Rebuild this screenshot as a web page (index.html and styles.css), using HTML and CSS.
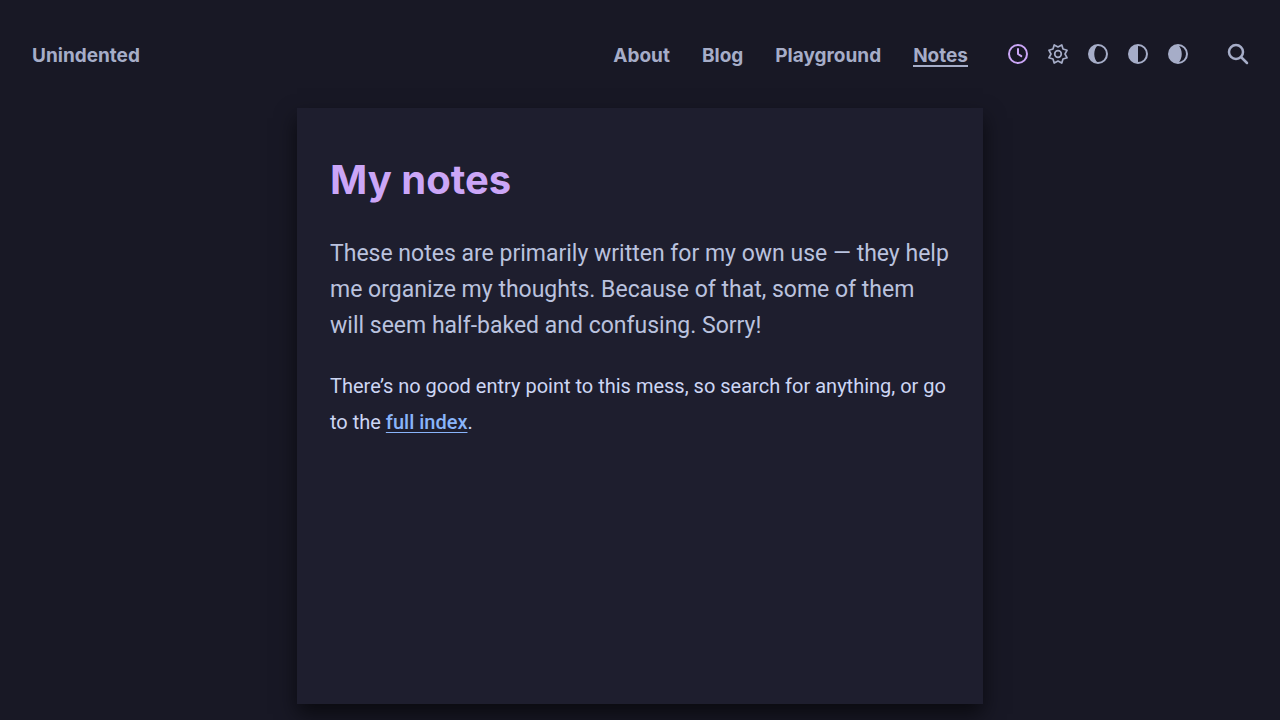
FILE: index.html
```html
<!DOCTYPE html>
<html lang="en">
<head>
<meta charset="utf-8">
<meta name="viewport" content="width=device-width, initial-scale=1">
<title>My notes</title>
<link rel="stylesheet" href="styles.css">
</head>
<body>
<header class="site-header">
  <a class="brand" href="#">Unindented</a>
  <nav class="nav" aria-label="Main">
    <a href="#">About</a>
    <a href="#">Blog</a>
    <a href="#">Playground</a>
    <a class="current" href="#" aria-current="page">Notes</a>
  </nav>
  <div class="themes" role="group" aria-label="Theme">
    <button class="icon-button active" type="button" aria-label="Automatic"><svg viewBox="0 0 24 24"><circle cx="12" cy="12" r="9"/><path d="M12 7v5l3.300 2.200"/></svg></button>
    <button class="icon-button gear" type="button" aria-label="Light"><svg viewBox="0 0 24 24"><circle cx="12" cy="12" r="3.300"/><path d="M15.800 2.900L17 7 21.100 8.200 19 12 21.100 15.800 17 17 15.800 21.100 12 19 8.200 21.100 7 17 2.900 15.800 5 12 2.900 8.200 7 7 8.200 2.900 12 5z"/></svg></button>
    <button class="icon-button" type="button" aria-label="Dim"><svg viewBox="0 0 24 24"><circle cx="12" cy="12" r="9"/><path class="solid" d="M12 3a9 9 0 0 0 0 18c-5-4-5-14 0-18z"/></svg></button>
    <button class="icon-button" type="button" aria-label="Dark"><svg viewBox="0 0 24 24"><circle cx="12" cy="12" r="9"/><path class="solid" d="M12 3a9 9 0 0 0 0 18z"/></svg></button>
    <button class="icon-button" type="button" aria-label="Darkest"><svg viewBox="0 0 24 24"><circle cx="12" cy="12" r="9"/><path class="solid" d="M12 3a9 9 0 0 0 0 18c5-4 5-14 0-18z"/></svg></button>
  </div>
  <button class="icon-button search" type="button" aria-label="Search"><svg viewBox="0 0 24 24"><circle cx="10" cy="10" r="7"/><path d="M15 15l6 6"/></svg></button>
</header>
<main class="sheet">
  <h1>My notes</h1>
  <p class="lead">These notes are primarily written for my own use — they help me organize my thoughts. Because of that, some of them will seem half-baked and confusing. Sorry!</p>
  <p class="body-text">There’s no good entry point to this mess, so search for anything, or go to the <a href="#">full index</a>.</p>
</main>
</body>
</html>
```
FILE: styles.css
```css
* { box-sizing: border-box; }
body {
  margin: 0;
  min-height: 100vh;
  display: flex;
  flex-direction: column;
  background: #181825;
  color: #cdd6f4;
  font-family: Roboto, Inter, sans-serif;
  font-size: 20px;
}
.site-header {
  display: flex;
  align-items: center;
  height: 108px;
  padding: 0 22px 0 32px;
  color: #a6adc8;
  font-family: Inter, sans-serif;
  font-size: 19px;
  font-weight: 700;
  line-height: 22px;
}
.site-header a { padding-top: 4px; color: inherit; text-decoration: none; }
.brand { margin-right: auto; }
.nav { display: flex; gap: 32px; margin-right: 30px; }
.site-header .current { box-shadow: inset 0 -2px #a6adc8; }
.themes { display: flex; }
.icon-button {
  display: grid;
  place-items: center;
  width: 40px;
  height: 40px;
  padding: 0;
  border: 0;
  background: none;
  color: #a6adc8;
}
.icon-button svg { width: 24px; height: 24px; fill: none; stroke: currentColor; stroke-width: 2; stroke-linecap: round; stroke-linejoin: round; }
.icon-button .solid { fill: currentColor; stroke: none; }
.active { color: #cba6f7; }
.gear svg { stroke-width: 1.7; }
.search { margin-left: 20px; }
.search svg { stroke-width: 2.5; }
.sheet {
  flex: 1;
  width: 100%;
  max-width: 686px;
  margin: 0 auto 16px;
  padding: 40px 32px 40px 33px;
  background: #1e1e2e;
  box-shadow: 0 10px 20px rgba(0, 0, 0, 0.6);
}
h1 { margin: 0; color: #cba6f7; font-family: Inter, sans-serif; font-size: 40px; line-height: 64px; font-weight: 700; }
.lead { margin: 24px 0; color: #bac2de; font-size: 23px; line-height: 36px; }
.body-text { margin: 0; line-height: 36px; }
.body-text a { color: #89b4fa; font-weight: 500; text-decoration: underline; text-decoration-thickness: 1px; text-underline-offset: 3px; }
```
